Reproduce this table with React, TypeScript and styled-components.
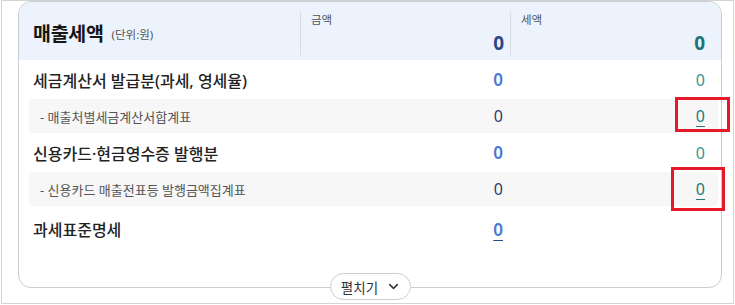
import React from 'react'
import styled, { createGlobalStyle } from 'styled-components'
import { ChevronDown } from 'lucide-react'

// 행 데이터
interface TaxRow {
  kind: 'main' | 'sub'
  label: string
  amount?: string
  tax?: string
  amountLink?: boolean
  taxLink?: boolean
}

const rows: TaxRow[] = [
  { kind: 'main', label: '세금계산서 발급분(과세, 영세율)', amount: '0', tax: '0' },
  { kind: 'sub', label: '- 매출처별세금계산서합계표', amount: '0', tax: '0', taxLink: true },
  { kind: 'main', label: '신용카드·현금영수증 발행분', amount: '0', tax: '0' },
  { kind: 'sub', label: '- 신용카드 매출전표등 발행금액집계표', amount: '0', tax: '0', taxLink: true },
  { kind: 'main', label: '과세표준명세', amount: '0', amountLink: true },
]

const GlobalStyle = createGlobalStyle`
  html, body {
    margin: 0;
    padding: 0;
    background: #fff;
  }
  body {
    font-family: 'Noto Sans', 'Noto Sans CJK KR', sans-serif;
    color: #222;
  }
`

const App: React.FC = () => {
  return (
    <>
      <GlobalStyle />
      <Page>
        <Card>
          <Header>
            <HeaderTitle>
              <Title>매출세액</Title>
              <Unit>(단위:원)</Unit>
            </HeaderTitle>
            <HeaderCell>
              <HeaderLabel>금액</HeaderLabel>
              <HeaderValue $tone='amount'>0</HeaderValue>
            </HeaderCell>
            <HeaderCell $wide>
              <HeaderLabel>세액</HeaderLabel>
              <HeaderValue $tone='tax'>0</HeaderValue>
            </HeaderCell>
          </Header>
          <Body>
            {rows.map((row, idx) =>
              row.kind === 'main' ? (
                <MainRow key={idx} $tall={idx === rows.length - 1}>
                  <MainLabel>{row.label}</MainLabel>
                  <AmountCell>
                    {row.amount && <MainAmount $link={row.amountLink}>{row.amount}</MainAmount>}
                  </AmountCell>
                  <TaxCell>{row.tax && <MainTax>{row.tax}</MainTax>}</TaxCell>
                </MainRow>
              ) : (
                <SubRow key={idx}>
                  <SubLabel>{row.label}</SubLabel>
                  <AmountCell>
                    <SubAmount>{row.amount}</SubAmount>
                  </AmountCell>
                  <TaxCell>
                    <SubTax $link={row.taxLink}>{row.tax}</SubTax>
                  </TaxCell>
                </SubRow>
              )
            )}
          </Body>
        </Card>
        <ToggleWrap>
          <ToggleButton type='button'>
            펼치기
            <ChevronDown size={15} strokeWidth={2.4} color='#333' />
          </ToggleButton>
        </ToggleWrap>
        <Highlight $x={674} $y={97} $w={55} $h={35} />
        <Highlight $x={670} $y={167} $w={54} $h={44} />
      </Page>
    </>
  )
}

const Page = styled.div`
  position: relative;
  box-sizing: border-box;
  width: 733px;
  height: 304px;
  margin-left: 1px;
  border: 1px solid #d4d4d4;
  padding: 0 11px 0 16px;
`

const Card = styled.div`
  box-sizing: border-box;
  height: 287px;
  border: 1px solid #c9ced6;
  border-radius: 13px;
  overflow: hidden;
  background: #fff;
`

const Header = styled.div`
  display: grid;
  grid-template-columns: 281px 210px 1fr;
  height: 58px;
  background: #edf3fd;
`

const HeaderTitle = styled.div`
  display: flex;
  align-items: center;
  gap: 8px;
  padding: 3px 0 0 14px;
  font-family: 'Noto Sans', 'Noto Sans CJK KR', sans-serif;
`

const Title = styled.span`
  font-size: 19.5px;
  font-weight: 700;
  color: #161616;
  letter-spacing: -0.3px;
`

const Unit = styled.span`
  font-size: 11.5px;
  color: #555;
  padding-top: 3px;
`

const HeaderCell = styled.div<{ $wide?: boolean }>`
  display: flex;
  flex-direction: column;
  justify-content: space-between;
  margin: 10px 0 5px;
  padding: 0 ${(p) => (p.$wide ? '16px' : '6px')} 0 10px;
  border-left: 1px solid #d6dce6;
`

const HeaderLabel = styled.span`
  font-family: 'Noto Sans CJK KR', sans-serif;
  font-size: 11.5px;
  line-height: 14px;
  color: #555;
`

const HeaderValue = styled.span<{ $tone: 'amount' | 'tax' }>`
  align-self: flex-end;
  font-size: 19px;
  font-weight: 700;
  line-height: 20px;
  margin-bottom: 2px;
  color: ${(p) => (p.$tone === 'amount' ? '#2c4789' : '#1c7676')};
`

const Body = styled.div`
  padding: 0 3px 0 10px;
`

const MainRow = styled.div<{ $tall?: boolean }>`
  display: grid;
  grid-template-columns: 271px 210px 1fr;
  align-items: center;
  height: ${(p) => (p.$tall ? '46px' : '39px')};
`

const SubRow = styled.div`
  display: grid;
  grid-template-columns: 271px 210px 1fr;
  align-items: center;
  height: 34px;
  background: #f7f7f7;
  border-radius: 4px;
`

const MainLabel = styled.span`
  padding-left: 4px;
  font-family: 'Noto Sans', 'Noto Sans CJK KR', sans-serif;
  font-size: 16px;
  font-weight: 500;
  color: #222;
`

const SubLabel = styled.span`
  padding-left: 11px;
  font-family: 'Noto Sans', 'Noto Sans CJK KR', sans-serif;
  font-size: 13px;
  color: #555;
  white-space: pre;
`

const AmountCell = styled.div`
  display: flex;
  justify-content: flex-end;
  padding-right: 7px;
`

const TaxCell = styled.div`
  display: flex;
  justify-content: flex-end;
  padding-right: 13px;
`

const MainAmount = styled.span<{ $link?: boolean }>`
  font-size: 17px;
  font-weight: 600;
  color: #4a79d4;
  text-decoration: ${(p) => (p.$link ? 'underline' : 'none')};
  text-decoration-color: #2c4789;
  text-underline-offset: 4px;
  text-decoration-thickness: 1px;
`

const MainTax = styled.span`
  font-size: 16px;
  color: #38968a;
`

const SubAmount = styled.span`
  font-size: 16px;
  color: #2e3d6e;
`

const SubTax = styled.span<{ $link?: boolean }>`
  font-size: 16px;
  color: #277777;
  text-decoration: ${(p) => (p.$link ? 'underline' : 'none')};
  text-underline-offset: 4px;
  text-decoration-thickness: 1px;
`

const ToggleWrap = styled.div`
  display: flex;
  justify-content: center;
  margin-top: -15px;
  padding-left: 1px;
`

const ToggleButton = styled.button`
  display: inline-flex;
  align-items: center;
  gap: 8px;
  height: 27px;
  padding: 0 9px 0 10px;
  border: 1px solid #c9ced6;
  border-radius: 14px;
  background: #fff;
  font-family: 'Noto Sans CJK KR', sans-serif;
  font-size: 13.5px;
  color: #333;
  cursor: pointer;
`

// 빨간 강조 표시 (스크린샷 주석)
const Highlight = styled.div<{ $x: number; $y: number; $w: number; $h: number }>`
  position: absolute;
  box-sizing: border-box;
  left: ${(p) => p.$x - 1}px;
  top: ${(p) => p.$y - 1}px;
  width: ${(p) => p.$w}px;
  height: ${(p) => p.$h}px;
  border: 3px solid #e5192a;
  pointer-events: none;
`

export default App
